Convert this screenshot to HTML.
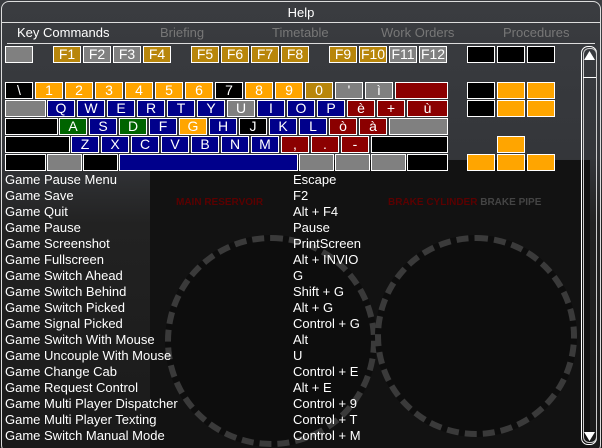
<!DOCTYPE html>
<html><head><style>
body{margin:0;width:602px;height:448px;overflow:hidden;background:#222;font-family:"Liberation Sans",sans-serif;}
#w{position:absolute;left:0;top:0;width:602px;height:448px;background:linear-gradient(180deg,#3a3c40 0%,#34363a 35%,#222 50%,#1a1a1a 100%);overflow:hidden}
.bd{position:absolute;left:1px;top:1px;width:598px;height:450px;border:1px solid #ddd;border-radius:8px}
.k{position:absolute;height:15px;border:1px solid #fff;box-sizing:content-box;color:#fff;font-size:14px;line-height:15px;text-align:center}
.o{background:#ffa500}.g{background:#b8860b}.y{background:#808080}.b{background:#00008b}.n{background:#006400}.r{background:#8b0000}.x{background:#000}
.t{position:absolute;color:#fff;font-size:13px;line-height:16px;white-space:nowrap}
.tab{position:absolute;top:25px;font-size:13px;color:#777}
.c{position:absolute;border-radius:50%;border:6px dashed #3a3a3a}
</style></head><body><div id="w">
<div style="position:absolute;left:150px;top:160px;width:440px;height:290px;background:#121212"></div>
<div class="c" style="left:165px;top:235px;width:200px;height:200px;background:#0d0d0d"></div>
<div class="c" style="left:375px;top:235px;width:190px;height:190px;background:#0d0d0d"></div>
<div style="position:absolute;left:176px;top:197px;color:#5a0000;font-size:10px;font-weight:bold">MAIN RESERVOIR</div>
<div style="position:absolute;left:388px;top:197px;color:#5a0000;font-size:10px;font-weight:bold">BRAKE CYLINDER <span style="color:#444">BRAKE PIPE</span></div>
<div class="bd"></div>
<div style="position:absolute;left:0;top:5px;width:602px;text-align:center;color:#fff;font-size:13px">Help</div>
<div style="position:absolute;left:2px;top:22px;width:598px;height:1px;background:#ddd"></div>
<div class="tab" style="left:17px;color:#fff">Key Commands</div>
<div class="tab" style="left:160px">Briefing</div>
<div class="tab" style="left:272px">Timetable</div>
<div class="tab" style="left:381px">Work Orders</div>
<div class="tab" style="left:503px">Procedures</div>
<div style="position:absolute;left:7px;top:43px;width:588px;height:1px;background:#ddd"></div>

<div class="k y" style="left:5px;top:46px;width:26px"></div>
<div class="k g" style="left:53px;top:46px;width:26px">F1</div>
<div class="k y" style="left:83px;top:46px;width:26px">F2</div>
<div class="k y" style="left:113px;top:46px;width:26px">F3</div>
<div class="k g" style="left:143px;top:46px;width:26px">F4</div>
<div class="k g" style="left:191px;top:46px;width:26px">F5</div>
<div class="k g" style="left:221px;top:46px;width:26px">F6</div>
<div class="k g" style="left:251px;top:46px;width:26px">F7</div>
<div class="k g" style="left:281px;top:46px;width:26px">F8</div>
<div class="k g" style="left:329px;top:46px;width:26px">F9</div>
<div class="k g" style="left:359px;top:46px;width:26px">F10</div>
<div class="k y" style="left:389px;top:46px;width:26px">F11</div>
<div class="k y" style="left:419px;top:46px;width:26px">F12</div>
<div class="k x" style="left:467px;top:46px;width:26px"></div>
<div class="k x" style="left:497px;top:46px;width:26px"></div>
<div class="k x" style="left:527px;top:46px;width:26px"></div>

<div class="k x" style="left:5px;top:82px;width:26px">\</div>
<div class="k o" style="left:35px;top:82px;width:26px">1</div>
<div class="k o" style="left:65px;top:82px;width:26px">2</div>
<div class="k o" style="left:95px;top:82px;width:26px">3</div>
<div class="k o" style="left:125px;top:82px;width:26px">4</div>
<div class="k o" style="left:155px;top:82px;width:26px">5</div>
<div class="k o" style="left:185px;top:82px;width:26px">6</div>
<div class="k x" style="left:215px;top:82px;width:26px">7</div>
<div class="k o" style="left:245px;top:82px;width:26px">8</div>
<div class="k o" style="left:275px;top:82px;width:26px">9</div>
<div class="k g" style="left:305px;top:82px;width:26px">0</div>
<div class="k y" style="left:335px;top:82px;width:26px">'</div>
<div class="k y" style="left:365px;top:82px;width:26px">ì</div>
<div class="k r" style="left:395px;top:82px;width:51px"></div>
<div class="k x" style="left:467px;top:82px;width:26px"></div>
<div class="k o" style="left:497px;top:82px;width:26px"></div>
<div class="k o" style="left:527px;top:82px;width:26px"></div>

<div class="k y" style="left:5px;top:100px;width:39px"></div>
<div class="k b" style="left:47px;top:100px;width:26px">Q</div>
<div class="k b" style="left:77px;top:100px;width:26px">W</div>
<div class="k b" style="left:107px;top:100px;width:26px">E</div>
<div class="k b" style="left:137px;top:100px;width:26px">R</div>
<div class="k b" style="left:167px;top:100px;width:26px">T</div>
<div class="k b" style="left:197px;top:100px;width:26px">Y</div>
<div class="k y" style="left:227px;top:100px;width:26px">U</div>
<div class="k b" style="left:257px;top:100px;width:26px">I</div>
<div class="k b" style="left:287px;top:100px;width:26px">O</div>
<div class="k b" style="left:317px;top:100px;width:26px">P</div>
<div class="k r" style="left:347px;top:100px;width:26px">è</div>
<div class="k r" style="left:377px;top:100px;width:26px">+</div>
<div class="k r" style="left:407px;top:100px;width:39px">ù</div>
<div class="k x" style="left:467px;top:100px;width:26px"></div>
<div class="k o" style="left:497px;top:100px;width:26px"></div>
<div class="k o" style="left:527px;top:100px;width:26px"></div>

<div class="k x" style="left:5px;top:118px;width:51px"></div>
<div class="k n" style="left:59px;top:118px;width:26px">A</div>
<div class="k b" style="left:89px;top:118px;width:26px">S</div>
<div class="k n" style="left:119px;top:118px;width:26px">D</div>
<div class="k b" style="left:149px;top:118px;width:26px">F</div>
<div class="k o" style="left:179px;top:118px;width:26px">G</div>
<div class="k b" style="left:209px;top:118px;width:26px">H</div>
<div class="k x" style="left:239px;top:118px;width:26px">J</div>
<div class="k b" style="left:269px;top:118px;width:26px">K</div>
<div class="k b" style="left:299px;top:118px;width:26px">L</div>
<div class="k r" style="left:329px;top:118px;width:26px">ò</div>
<div class="k r" style="left:359px;top:118px;width:26px">à</div>
<div class="k y" style="left:389px;top:118px;width:57px"></div>

<div class="k x" style="left:5px;top:136px;width:63px"></div>
<div class="k b" style="left:71px;top:136px;width:26px">Z</div>
<div class="k b" style="left:101px;top:136px;width:26px">X</div>
<div class="k b" style="left:131px;top:136px;width:26px">C</div>
<div class="k b" style="left:161px;top:136px;width:26px">V</div>
<div class="k b" style="left:191px;top:136px;width:26px">B</div>
<div class="k b" style="left:221px;top:136px;width:26px">N</div>
<div class="k b" style="left:251px;top:136px;width:26px">M</div>
<div class="k r" style="left:281px;top:136px;width:26px">,</div>
<div class="k r" style="left:311px;top:136px;width:26px">.</div>
<div class="k r" style="left:341px;top:136px;width:26px">-</div>
<div class="k x" style="left:371px;top:136px;width:75px"></div>
<div class="k o" style="left:497px;top:136px;width:26px"></div>

<div class="k x" style="left:5px;top:154px;width:39px"></div>
<div class="k y" style="left:47px;top:154px;width:33px"></div>
<div class="k x" style="left:83px;top:154px;width:33px"></div>
<div class="k b" style="left:119px;top:154px;width:177px"></div>
<div class="k y" style="left:299px;top:154px;width:33px"></div>
<div class="k y" style="left:335px;top:154px;width:33px"></div>
<div class="k y" style="left:371px;top:154px;width:33px"></div>
<div class="k x" style="left:407px;top:154px;width:39px"></div>
<div class="k o" style="left:467px;top:154px;width:26px"></div>
<div class="k o" style="left:497px;top:154px;width:26px"></div>
<div class="k o" style="left:527px;top:154px;width:26px"></div>

<div class="t" style="left:5px;top:172px">Game Pause Menu<br>Game Save<br>Game Quit<br>Game Pause<br>Game Screenshot<br>Game Fullscreen<br>Game Switch Ahead<br>Game Switch Behind<br>Game Switch Picked<br>Game Signal Picked<br>Game Switch With Mouse<br>Game Uncouple With Mouse<br>Game Change Cab<br>Game Request Control<br>Game Multi Player Dispatcher<br>Game Multi Player Texting<br>Game Switch Manual Mode</div>
<div class="t" style="left:293px;top:172px">Escape<br>F2<br>Alt + F4<br>Pause<br>PrintScreen<br>Alt + INVIO<br>G<br>Shift + G<br>Alt + G<br>Control + G<br>Alt<br>U<br>Control + E<br>Alt + E<br>Control + 9<br>Control + T<br>Control + M</div>

<div style="position:absolute;left:581px;top:46px;width:14px;height:397px;border:1px solid #fff;border-radius:7px"></div>
<div style="position:absolute;left:583px;top:48px;width:12px;height:393px;border:1px solid #ccc;border-radius:6px"></div>
<div style="position:absolute;left:583px;top:77px;width:13px;height:1px;background:#fff"></div>
<svg style="position:absolute;left:582px;top:48px" width="15" height="14"><path d="M2 12 L7.5 3 L13 12 Z" fill="#fff"/></svg>
<svg style="position:absolute;left:582px;top:430px" width="15" height="14"><path d="M2 2 L7.5 11 L13 2 Z" fill="#fff"/></svg>
</div></body></html>
